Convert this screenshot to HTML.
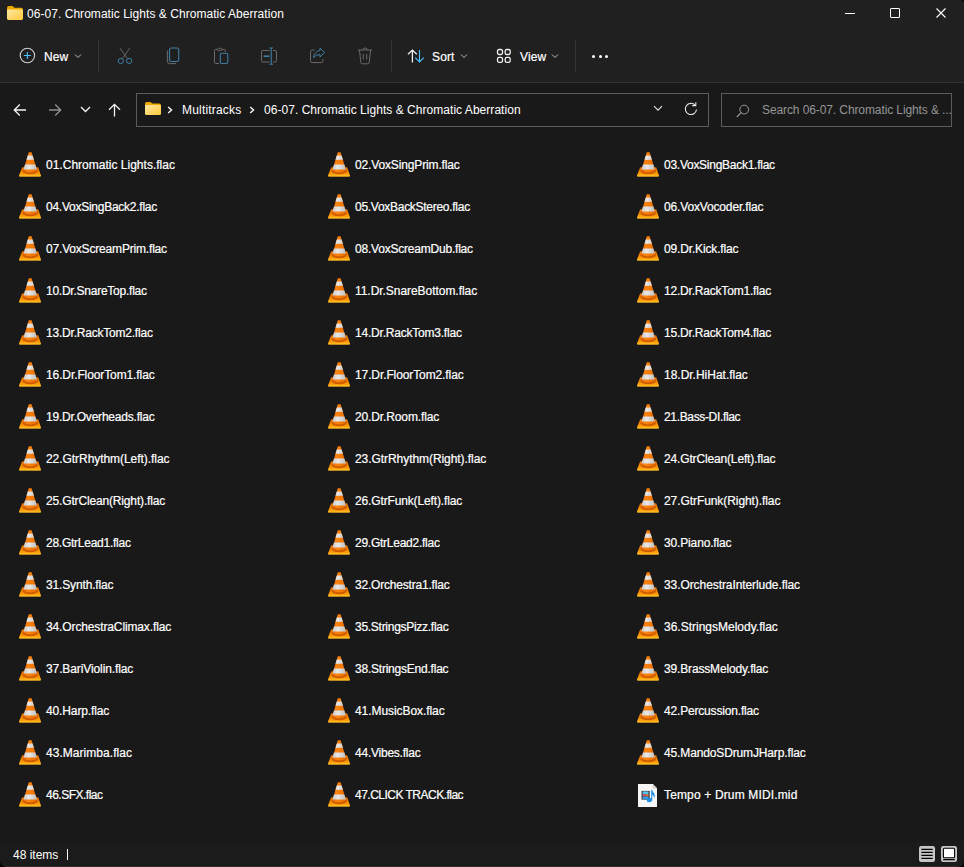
<!DOCTYPE html>
<html><head><meta charset="utf-8">
<style>
html,body{margin:0;padding:0;width:964px;height:867px;overflow:hidden;background:#000;}
body{font-family:"Liberation Sans",sans-serif;font-size:12px;color:#fff;position:relative;}
#win{position:absolute;left:0;top:0;width:964px;height:867px;box-sizing:border-box;border-bottom:1px solid #2e2e2e;background:#191919;border-radius:0 4px 7px 7px;overflow:hidden;}
#top{position:absolute;left:0;top:0;width:964px;height:82px;background:#202020;}
#sep{position:absolute;left:0;top:82px;width:964px;height:1px;background:#333;}
.a{position:absolute;}
.t{position:absolute;white-space:nowrap;line-height:14px;}
.ic{position:absolute;}
.fn{position:absolute;white-space:nowrap;line-height:14px;color:#fff;-webkit-text-stroke:0.2px #fff;}
.vsep{position:absolute;width:1px;background:#353535;}
.box{position:absolute;border:1px solid #5c5c5c;box-sizing:border-box;background:#191919;}
#status{position:absolute;left:0;top:842px;width:964px;height:25px;background:#1b1b1b;}
</style></head><body>
<svg width="0" height="0" style="position:absolute">
<defs>
<linearGradient id="cg" x1="0" x2="1" y1="0" y2="0">
<stop offset="0" stop-color="#d45800"/><stop offset="0.4" stop-color="#fa8412"/><stop offset="0.7" stop-color="#f07400"/><stop offset="1" stop-color="#c95000"/>
</linearGradient>
<linearGradient id="bg" x1="0" x2="0" y1="0" y2="1">
<stop offset="0" stop-color="#e46800"/><stop offset="0.6" stop-color="#f89400"/><stop offset="1" stop-color="#ffb820"/>
</linearGradient>
<linearGradient id="wg" x1="0" x2="1" y1="0" y2="0">
<stop offset="0" stop-color="#b0b0b0"/><stop offset="0.45" stop-color="#e8e8e8"/><stop offset="1" stop-color="#a8a8a8"/>
</linearGradient>
<linearGradient id="fg" x1="0" y1="0" x2="1" y2="1"><stop offset="0" stop-color="#ffe9a3"/><stop offset="1" stop-color="#ffc83a"/></linearGradient>
<clipPath id="cc"><path d="M9.8 0.3 L12.6 0.3 L18.2 18.5 Q11.2 22.5 4.2 18.5 Z"/></clipPath>
</defs></svg>
<div id="win">
<div id="top"></div>
<div id="sep"></div>
<!-- title -->
<svg class="a" style="left:7px;top:6px" width="16" height="14" viewBox="0 0 16 14">
<path d="M0 2 Q0 0 2 0 L5.5 0 L7.5 1.8 L14 1.8 Q16 1.8 16 3.8 L16 12 Q16 14 14 14 L2 14 Q0 14 0 12 Z" fill="#ecaa00"/>
<path d="M0 4.6 Q0 3.6 1.3 3.6 L14.7 3.6 Q16 3.6 16 4.9 L16 12 Q16 14 14 14 L2 14 Q0 14 0 12 Z" fill="url(#fg)"/>
</svg>
<div class="t" style="left:27px;top:7px;letter-spacing:0.045px">06-07. Chromatic Lights &amp; Chromatic Aberration</div>
<!-- window controls -->
<div class="a" style="left:845px;top:13px;width:10px;height:1px;background:#fff"></div>
<div class="a" style="left:890px;top:8px;width:10px;height:10px;border:1px solid #fff;box-sizing:border-box;border-radius:1px"></div>
<svg class="a" style="left:936px;top:8px" width="10" height="10" viewBox="0 0 10 10"><path d="M0.5 0.5 L9.5 9.5 M9.5 0.5 L0.5 9.5" stroke="#fff" stroke-width="1.1"/></svg>
<!-- command bar -->
<svg class="a" style="left:19px;top:47px" width="17" height="17" viewBox="0 0 17 17">
<circle cx="8.4" cy="8.5" r="7.2" fill="none" stroke="#d0d0d0" stroke-width="1.1"/>
<path d="M8.4 5 V12 M4.9 8.5 H11.9" stroke="#4cc2ff" stroke-width="1.1"/>
</svg>
<div class="t" style="left:44px;top:50px;letter-spacing:0.12px;-webkit-text-stroke:0.2px #fff">New</div>
<svg class="a" style="left:74px;top:53px" width="8" height="6" viewBox="0 0 8 6"><path d="M1 1.5 L4 4.5 L7 1.5" fill="none" stroke="#bbb" stroke-width="1"/></svg>
<div class="vsep" style="left:98px;top:40px;height:32px"></div>
<!-- cut -->
<svg class="a" style="left:116px;top:47px" width="18" height="18" viewBox="0 0 18 18">
<path d="M3.9 1 L11.2 11.4 M13.9 1 L6.6 11.4" stroke="#666" stroke-width="1"/>
<circle cx="4.8" cy="13.9" r="2.6" fill="#202020" stroke="#3f7ea3" stroke-width="1"/>
<circle cx="13.1" cy="13.9" r="2.6" fill="#202020" stroke="#3f7ea3" stroke-width="1"/>
</svg>
<!-- copy -->
<svg class="a" style="left:166px;top:47px" width="14" height="18" viewBox="0 0 14 18">
<path d="M1.4 3.5 V14.5 Q1.4 16.6 3.5 16.6 H10" fill="none" stroke="#6a6a6a" stroke-width="1"/>
<rect x="3.5" y="1" width="9.2" height="13.5" rx="1.8" fill="none" stroke="#3f7ea3" stroke-width="1.1"/>
</svg>
<!-- paste -->
<svg class="a" style="left:213px;top:47px" width="16" height="18" viewBox="0 0 16 18">
<path d="M6 16.5 H2.5 Q1.5 16.5 1.5 15.5 V3.5 Q1.5 2.5 2.5 2.5 H4.5 M9 2.5 H11 Q12.2 2.5 12.2 3.5 V5" fill="none" stroke="#6a6a6a" stroke-width="1"/>
<rect x="4.5" y="1.3" width="4.5" height="2.4" rx="1.2" fill="none" stroke="#6a6a6a" stroke-width="1"/>
<rect x="7.3" y="6.3" width="7.5" height="10.2" rx="1.5" fill="none" stroke="#3f7ea3" stroke-width="1.1"/>
</svg>
<!-- rename -->
<svg class="a" style="left:260px;top:47px" width="18" height="18" viewBox="0 0 18 18">
<path d="M9.5 3.5 H3 Q1.5 3.5 1.5 5 V13.5 Q1.5 15 3 15 H9.5 M13 3.5 H15 Q16.5 3.5 16.5 5 V13.5 Q16.5 15 15 15 H13" fill="none" stroke="#6a6a6a" stroke-width="1"/>
<path d="M11.2 1 V17.2 M9.4 1 H13 M9.4 17.2 H13" fill="none" stroke="#3f7ea3" stroke-width="1.1"/><path d="M3.6 9.2 H9.4" stroke="#3f7ea3" stroke-width="1.7"/>
</svg>
<!-- share -->
<svg class="a" style="left:309px;top:47px" width="17" height="17" viewBox="0 0 17 17">
<path d="M5.5 3 H3.2 Q1.5 3 1.5 4.7 V13.8 Q1.5 15.6 3.2 15.6 H12.3 Q14 15.6 14 13.8 V12" fill="none" stroke="#6a6a6a" stroke-width="1"/>
<path d="M11 1 L15.5 5.5 L11 10 V7.6 Q7 7.3 4.5 10.5 Q5.3 4.5 11 3.4 Z" fill="none" stroke="#3f7ea3" stroke-width="1" stroke-linejoin="round"/>
</svg>
<!-- delete -->
<svg class="a" style="left:357px;top:47px" width="16" height="18" viewBox="0 0 16 18">
<path d="M0.8 3 H15.2 M5.8 3 Q5.8 1 8 1 Q10.2 1 10.2 3 M2.5 3 L3.8 15.5 Q4 16.8 5.3 16.8 H10.7 Q12 16.8 12.2 15.5 L13.5 3 M6.3 7 V12.5 M9.7 7 V12.5" fill="none" stroke="#6a6a6a" stroke-width="1"/>
</svg>
<div class="vsep" style="left:391px;top:40px;height:32px"></div>
<!-- sort -->
<svg class="a" style="left:407px;top:49px" width="18" height="14" viewBox="0 0 18 14">
<path d="M5.4 1 V13.5 M1 5.3 L5.4 1 L9.8 5.3" fill="none" stroke="#f2f2f2" stroke-width="1.25"/>
<path d="M12.5 1 V13 M8.2 8.7 L12.5 13 L16.8 8.7" fill="none" stroke="#4cc2ff" stroke-width="1.1"/>
</svg>
<div class="t" style="left:432px;top:50px;letter-spacing:0.15px;-webkit-text-stroke:0.2px #fff">Sort</div>
<svg class="a" style="left:460px;top:53px" width="8" height="6" viewBox="0 0 8 6"><path d="M1 1.5 L4 4.5 L7 1.5" fill="none" stroke="#bbb" stroke-width="1"/></svg>
<!-- view -->
<svg class="a" style="left:496px;top:48px" width="16" height="16" viewBox="0 0 16 16">
<rect x="1.5" y="1.5" width="5" height="5" rx="1.6" fill="none" stroke="#f0f0f0" stroke-width="1.3"/>
<rect x="9.2" y="1.5" width="5" height="5" rx="1.6" fill="none" stroke="#f0f0f0" stroke-width="1.3"/>
<rect x="1.5" y="9.3" width="5" height="5" rx="1.6" fill="none" stroke="#f0f0f0" stroke-width="1.3"/>
<rect x="9.2" y="9.3" width="5" height="5" rx="1.6" fill="none" stroke="#f0f0f0" stroke-width="1.3"/>
</svg>
<div class="t" style="left:520px;top:50px;letter-spacing:0.12px;-webkit-text-stroke:0.2px #fff">View</div>
<svg class="a" style="left:551px;top:53px" width="8" height="6" viewBox="0 0 8 6"><path d="M1 1.5 L4 4.5 L7 1.5" fill="none" stroke="#bbb" stroke-width="1"/></svg>
<div class="vsep" style="left:575px;top:40px;height:32px"></div>
<div class="a" style="left:592.2px;top:55.3px;width:3px;height:3px;border-radius:50%;background:#fff"></div>
<div class="a" style="left:598.5px;top:55.3px;width:3px;height:3px;border-radius:50%;background:#fff"></div>
<div class="a" style="left:604.8px;top:55.3px;width:3px;height:3px;border-radius:50%;background:#fff"></div>

<!-- address row -->
<svg class="a" style="left:13px;top:103px" width="14" height="14" viewBox="0 0 14 14">
<path d="M13 7 H1.5 M6.8 1.6 L1.3 7 L6.8 12.4" fill="none" stroke="#f2f2f2" stroke-width="1.35"/>
</svg>
<svg class="a" style="left:48px;top:103px" width="14" height="14" viewBox="0 0 14 14">
<path d="M1 7 H12.5 M7.2 1.6 L12.7 7 L7.2 12.4" fill="none" stroke="#909090" stroke-width="1.35"/>
</svg>
<svg class="a" style="left:80px;top:106px" width="11" height="7" viewBox="0 0 11 7">
<path d="M1 1 L5.5 5.5 L10 1" fill="none" stroke="#f2f2f2" stroke-width="1.35"/>
</svg>
<svg class="a" style="left:108px;top:103px" width="13" height="14" viewBox="0 0 13 14">
<path d="M6.5 13.5 V1.3 M1 6.8 L6.5 1.3 L12 6.8" fill="none" stroke="#f2f2f2" stroke-width="1.3"/>
</svg>
<div class="box" style="left:136px;top:93px;width:573px;height:34px"></div>
<svg class="a" style="left:145px;top:102px" width="16" height="13" viewBox="0 0 16 13">
<path d="M0 1.8 Q0 0 1.8 0 L5.5 0 L7.3 1.6 L14.2 1.6 Q16 1.6 16 3.4 L16 11.2 Q16 13 14.2 13 L1.8 13 Q0 13 0 11.2 Z" fill="#ecaa00"/>
<path d="M0 4 Q0 3 1.3 3 L14.7 3 Q16 3 16 4.3 L16 11.2 Q16 13 14.2 13 L1.8 13 Q0 13 0 11.2 Z" fill="url(#fg)"/>
</svg>
<svg class="a" style="left:167px;top:106px" width="6" height="8" viewBox="0 0 6 8"><path d="M1.2 1 L4.5 4 L1.2 7" fill="none" stroke="#f2f2f2" stroke-width="1.5"/></svg>
<div class="t" style="left:182px;top:103px;letter-spacing:0.18px">Multitracks</div>
<svg class="a" style="left:249px;top:106px" width="6" height="8" viewBox="0 0 6 8"><path d="M1.2 1 L4.5 4 L1.2 7" fill="none" stroke="#f2f2f2" stroke-width="1.5"/></svg>
<div class="t" style="left:264px;top:103px;letter-spacing:0.04px">06-07. Chromatic Lights &amp; Chromatic Aberration</div>
<svg class="a" style="left:653px;top:105px" width="10" height="7" viewBox="0 0 10 7"><path d="M1 1.2 L5 5.2 L9 1.2" fill="none" stroke="#e8e8e8" stroke-width="1.1"/></svg>
<svg class="a" style="left:684px;top:102px" width="14" height="14" viewBox="0 0 14 14">
<path d="M11.2 3.3 A5.6 5.6 0 1 0 12.5 7.5" fill="none" stroke="#e8e8e8" stroke-width="1.1"/>
<path d="M8.2 3.6 H11.8 V0.2" fill="none" stroke="#e8e8e8" stroke-width="1.1"/>
</svg>
<div class="box" style="left:721px;top:93px;width:231px;height:34px;overflow:hidden">
<svg class="a" style="left:14px;top:10px" width="14" height="14" viewBox="0 0 14 14">
<circle cx="8.2" cy="5.6" r="4.4" fill="none" stroke="#9a9a9a" stroke-width="1"/>
<path d="M5.4 8.4 L0.8 13" stroke="#9a9a9a" stroke-width="1.1"/>
</svg>
<div class="t" style="left:40px;top:9px;color:#959595;letter-spacing:-0.1px">Search 06-07. Chromatic Lights &amp; ...</div>
</div>

<!-- items -->
<svg class="ic" style="left:19px;top:152px" width="22" height="25" viewBox="0 0 22 25"><path d="M3.2 15.3 L19.2 15.3 L21.9 23.2 Q22 24.6 20.6 24.6 L1.4 24.6 Q0 24.6 0.1 23.2 Z" fill="url(#bg)"/>
<path d="M0.4 23.0 L21.6 23.0 L21.9 24.6 L0.1 24.6 Z" fill="#ffb820" opacity="0.8"/>
<ellipse cx="11.2" cy="18.9" rx="7.8" ry="3.4" fill="#cf5a00"/>
<g clip-path="url(#cc)">
<rect x="0" y="0" width="22" height="22" fill="url(#cg)"/>
<rect x="0" y="3.5" width="22" height="4.3" fill="url(#wg)"/>
<rect x="0" y="12.5" width="22" height="5" fill="url(#wg)"/>
</g></svg><div class="fn" style="left:46px;top:158px;letter-spacing:0.009px">01.Chromatic Lights.flac</div>
<svg class="ic" style="left:328px;top:152px" width="22" height="25" viewBox="0 0 22 25"><path d="M3.2 15.3 L19.2 15.3 L21.9 23.2 Q22 24.6 20.6 24.6 L1.4 24.6 Q0 24.6 0.1 23.2 Z" fill="url(#bg)"/>
<path d="M0.4 23.0 L21.6 23.0 L21.9 24.6 L0.1 24.6 Z" fill="#ffb820" opacity="0.8"/>
<ellipse cx="11.2" cy="18.9" rx="7.8" ry="3.4" fill="#cf5a00"/>
<g clip-path="url(#cc)">
<rect x="0" y="0" width="22" height="22" fill="url(#cg)"/>
<rect x="0" y="3.5" width="22" height="4.3" fill="url(#wg)"/>
<rect x="0" y="12.5" width="22" height="5" fill="url(#wg)"/>
</g></svg><div class="fn" style="left:355px;top:158px;letter-spacing:-0.143px">02.VoxSingPrim.flac</div>
<svg class="ic" style="left:637px;top:152px" width="22" height="25" viewBox="0 0 22 25"><path d="M3.2 15.3 L19.2 15.3 L21.9 23.2 Q22 24.6 20.6 24.6 L1.4 24.6 Q0 24.6 0.1 23.2 Z" fill="url(#bg)"/>
<path d="M0.4 23.0 L21.6 23.0 L21.9 24.6 L0.1 24.6 Z" fill="#ffb820" opacity="0.8"/>
<ellipse cx="11.2" cy="18.9" rx="7.8" ry="3.4" fill="#cf5a00"/>
<g clip-path="url(#cc)">
<rect x="0" y="0" width="22" height="22" fill="url(#cg)"/>
<rect x="0" y="3.5" width="22" height="4.3" fill="url(#wg)"/>
<rect x="0" y="12.5" width="22" height="5" fill="url(#wg)"/>
</g></svg><div class="fn" style="left:664px;top:158px;letter-spacing:-0.263px">03.VoxSingBack1.flac</div>
<svg class="ic" style="left:19px;top:194px" width="22" height="25" viewBox="0 0 22 25"><path d="M3.2 15.3 L19.2 15.3 L21.9 23.2 Q22 24.6 20.6 24.6 L1.4 24.6 Q0 24.6 0.1 23.2 Z" fill="url(#bg)"/>
<path d="M0.4 23.0 L21.6 23.0 L21.9 24.6 L0.1 24.6 Z" fill="#ffb820" opacity="0.8"/>
<ellipse cx="11.2" cy="18.9" rx="7.8" ry="3.4" fill="#cf5a00"/>
<g clip-path="url(#cc)">
<rect x="0" y="0" width="22" height="22" fill="url(#cg)"/>
<rect x="0" y="3.5" width="22" height="4.3" fill="url(#wg)"/>
<rect x="0" y="12.5" width="22" height="5" fill="url(#wg)"/>
</g></svg><div class="fn" style="left:46px;top:200px;letter-spacing:-0.252px">04.VoxSingBack2.flac</div>
<svg class="ic" style="left:328px;top:194px" width="22" height="25" viewBox="0 0 22 25"><path d="M3.2 15.3 L19.2 15.3 L21.9 23.2 Q22 24.6 20.6 24.6 L1.4 24.6 Q0 24.6 0.1 23.2 Z" fill="url(#bg)"/>
<path d="M0.4 23.0 L21.6 23.0 L21.9 24.6 L0.1 24.6 Z" fill="#ffb820" opacity="0.8"/>
<ellipse cx="11.2" cy="18.9" rx="7.8" ry="3.4" fill="#cf5a00"/>
<g clip-path="url(#cc)">
<rect x="0" y="0" width="22" height="22" fill="url(#cg)"/>
<rect x="0" y="3.5" width="22" height="4.3" fill="url(#wg)"/>
<rect x="0" y="12.5" width="22" height="5" fill="url(#wg)"/>
</g></svg><div class="fn" style="left:355px;top:200px;letter-spacing:-0.280px">05.VoxBackStereo.flac</div>
<svg class="ic" style="left:637px;top:194px" width="22" height="25" viewBox="0 0 22 25"><path d="M3.2 15.3 L19.2 15.3 L21.9 23.2 Q22 24.6 20.6 24.6 L1.4 24.6 Q0 24.6 0.1 23.2 Z" fill="url(#bg)"/>
<path d="M0.4 23.0 L21.6 23.0 L21.9 24.6 L0.1 24.6 Z" fill="#ffb820" opacity="0.8"/>
<ellipse cx="11.2" cy="18.9" rx="7.8" ry="3.4" fill="#cf5a00"/>
<g clip-path="url(#cc)">
<rect x="0" y="0" width="22" height="22" fill="url(#cg)"/>
<rect x="0" y="3.5" width="22" height="4.3" fill="url(#wg)"/>
<rect x="0" y="12.5" width="22" height="5" fill="url(#wg)"/>
</g></svg><div class="fn" style="left:664px;top:200px;letter-spacing:-0.153px">06.VoxVocoder.flac</div>
<svg class="ic" style="left:19px;top:236px" width="22" height="25" viewBox="0 0 22 25"><path d="M3.2 15.3 L19.2 15.3 L21.9 23.2 Q22 24.6 20.6 24.6 L1.4 24.6 Q0 24.6 0.1 23.2 Z" fill="url(#bg)"/>
<path d="M0.4 23.0 L21.6 23.0 L21.9 24.6 L0.1 24.6 Z" fill="#ffb820" opacity="0.8"/>
<ellipse cx="11.2" cy="18.9" rx="7.8" ry="3.4" fill="#cf5a00"/>
<g clip-path="url(#cc)">
<rect x="0" y="0" width="22" height="22" fill="url(#cg)"/>
<rect x="0" y="3.5" width="22" height="4.3" fill="url(#wg)"/>
<rect x="0" y="12.5" width="22" height="5" fill="url(#wg)"/>
</g></svg><div class="fn" style="left:46px;top:242px;letter-spacing:-0.180px">07.VoxScreamPrim.flac</div>
<svg class="ic" style="left:328px;top:236px" width="22" height="25" viewBox="0 0 22 25"><path d="M3.2 15.3 L19.2 15.3 L21.9 23.2 Q22 24.6 20.6 24.6 L1.4 24.6 Q0 24.6 0.1 23.2 Z" fill="url(#bg)"/>
<path d="M0.4 23.0 L21.6 23.0 L21.9 24.6 L0.1 24.6 Z" fill="#ffb820" opacity="0.8"/>
<ellipse cx="11.2" cy="18.9" rx="7.8" ry="3.4" fill="#cf5a00"/>
<g clip-path="url(#cc)">
<rect x="0" y="0" width="22" height="22" fill="url(#cg)"/>
<rect x="0" y="3.5" width="22" height="4.3" fill="url(#wg)"/>
<rect x="0" y="12.5" width="22" height="5" fill="url(#wg)"/>
</g></svg><div class="fn" style="left:355px;top:242px;letter-spacing:-0.211px">08.VoxScreamDub.flac</div>
<svg class="ic" style="left:637px;top:236px" width="22" height="25" viewBox="0 0 22 25"><path d="M3.2 15.3 L19.2 15.3 L21.9 23.2 Q22 24.6 20.6 24.6 L1.4 24.6 Q0 24.6 0.1 23.2 Z" fill="url(#bg)"/>
<path d="M0.4 23.0 L21.6 23.0 L21.9 24.6 L0.1 24.6 Z" fill="#ffb820" opacity="0.8"/>
<ellipse cx="11.2" cy="18.9" rx="7.8" ry="3.4" fill="#cf5a00"/>
<g clip-path="url(#cc)">
<rect x="0" y="0" width="22" height="22" fill="url(#cg)"/>
<rect x="0" y="3.5" width="22" height="4.3" fill="url(#wg)"/>
<rect x="0" y="12.5" width="22" height="5" fill="url(#wg)"/>
</g></svg><div class="fn" style="left:664px;top:242px;letter-spacing:-0.156px">09.Dr.Kick.flac</div>
<svg class="ic" style="left:19px;top:278px" width="22" height="25" viewBox="0 0 22 25"><path d="M3.2 15.3 L19.2 15.3 L21.9 23.2 Q22 24.6 20.6 24.6 L1.4 24.6 Q0 24.6 0.1 23.2 Z" fill="url(#bg)"/>
<path d="M0.4 23.0 L21.6 23.0 L21.9 24.6 L0.1 24.6 Z" fill="#ffb820" opacity="0.8"/>
<ellipse cx="11.2" cy="18.9" rx="7.8" ry="3.4" fill="#cf5a00"/>
<g clip-path="url(#cc)">
<rect x="0" y="0" width="22" height="22" fill="url(#cg)"/>
<rect x="0" y="3.5" width="22" height="4.3" fill="url(#wg)"/>
<rect x="0" y="12.5" width="22" height="5" fill="url(#wg)"/>
</g></svg><div class="fn" style="left:46px;top:284px;letter-spacing:-0.245px">10.Dr.SnareTop.flac</div>
<svg class="ic" style="left:328px;top:278px" width="22" height="25" viewBox="0 0 22 25"><path d="M3.2 15.3 L19.2 15.3 L21.9 23.2 Q22 24.6 20.6 24.6 L1.4 24.6 Q0 24.6 0.1 23.2 Z" fill="url(#bg)"/>
<path d="M0.4 23.0 L21.6 23.0 L21.9 24.6 L0.1 24.6 Z" fill="#ffb820" opacity="0.8"/>
<ellipse cx="11.2" cy="18.9" rx="7.8" ry="3.4" fill="#cf5a00"/>
<g clip-path="url(#cc)">
<rect x="0" y="0" width="22" height="22" fill="url(#cg)"/>
<rect x="0" y="3.5" width="22" height="4.3" fill="url(#wg)"/>
<rect x="0" y="12.5" width="22" height="5" fill="url(#wg)"/>
</g></svg><div class="fn" style="left:355px;top:284px;letter-spacing:-0.048px">11.Dr.SnareBottom.flac</div>
<svg class="ic" style="left:637px;top:278px" width="22" height="25" viewBox="0 0 22 25"><path d="M3.2 15.3 L19.2 15.3 L21.9 23.2 Q22 24.6 20.6 24.6 L1.4 24.6 Q0 24.6 0.1 23.2 Z" fill="url(#bg)"/>
<path d="M0.4 23.0 L21.6 23.0 L21.9 24.6 L0.1 24.6 Z" fill="#ffb820" opacity="0.8"/>
<ellipse cx="11.2" cy="18.9" rx="7.8" ry="3.4" fill="#cf5a00"/>
<g clip-path="url(#cc)">
<rect x="0" y="0" width="22" height="22" fill="url(#cg)"/>
<rect x="0" y="3.5" width="22" height="4.3" fill="url(#wg)"/>
<rect x="0" y="12.5" width="22" height="5" fill="url(#wg)"/>
</g></svg><div class="fn" style="left:664px;top:284px;letter-spacing:-0.199px">12.Dr.RackTom1.flac</div>
<svg class="ic" style="left:19px;top:320px" width="22" height="25" viewBox="0 0 22 25"><path d="M3.2 15.3 L19.2 15.3 L21.9 23.2 Q22 24.6 20.6 24.6 L1.4 24.6 Q0 24.6 0.1 23.2 Z" fill="url(#bg)"/>
<path d="M0.4 23.0 L21.6 23.0 L21.9 24.6 L0.1 24.6 Z" fill="#ffb820" opacity="0.8"/>
<ellipse cx="11.2" cy="18.9" rx="7.8" ry="3.4" fill="#cf5a00"/>
<g clip-path="url(#cc)">
<rect x="0" y="0" width="22" height="22" fill="url(#cg)"/>
<rect x="0" y="3.5" width="22" height="4.3" fill="url(#wg)"/>
<rect x="0" y="12.5" width="22" height="5" fill="url(#wg)"/>
</g></svg><div class="fn" style="left:46px;top:326px;letter-spacing:-0.211px">13.Dr.RackTom2.flac</div>
<svg class="ic" style="left:328px;top:320px" width="22" height="25" viewBox="0 0 22 25"><path d="M3.2 15.3 L19.2 15.3 L21.9 23.2 Q22 24.6 20.6 24.6 L1.4 24.6 Q0 24.6 0.1 23.2 Z" fill="url(#bg)"/>
<path d="M0.4 23.0 L21.6 23.0 L21.9 24.6 L0.1 24.6 Z" fill="#ffb820" opacity="0.8"/>
<ellipse cx="11.2" cy="18.9" rx="7.8" ry="3.4" fill="#cf5a00"/>
<g clip-path="url(#cc)">
<rect x="0" y="0" width="22" height="22" fill="url(#cg)"/>
<rect x="0" y="3.5" width="22" height="4.3" fill="url(#wg)"/>
<rect x="0" y="12.5" width="22" height="5" fill="url(#wg)"/>
</g></svg><div class="fn" style="left:355px;top:326px;letter-spacing:-0.211px">14.Dr.RackTom3.flac</div>
<svg class="ic" style="left:637px;top:320px" width="22" height="25" viewBox="0 0 22 25"><path d="M3.2 15.3 L19.2 15.3 L21.9 23.2 Q22 24.6 20.6 24.6 L1.4 24.6 Q0 24.6 0.1 23.2 Z" fill="url(#bg)"/>
<path d="M0.4 23.0 L21.6 23.0 L21.9 24.6 L0.1 24.6 Z" fill="#ffb820" opacity="0.8"/>
<ellipse cx="11.2" cy="18.9" rx="7.8" ry="3.4" fill="#cf5a00"/>
<g clip-path="url(#cc)">
<rect x="0" y="0" width="22" height="22" fill="url(#cg)"/>
<rect x="0" y="3.5" width="22" height="4.3" fill="url(#wg)"/>
<rect x="0" y="12.5" width="22" height="5" fill="url(#wg)"/>
</g></svg><div class="fn" style="left:664px;top:326px;letter-spacing:-0.199px">15.Dr.RackTom4.flac</div>
<svg class="ic" style="left:19px;top:362px" width="22" height="25" viewBox="0 0 22 25"><path d="M3.2 15.3 L19.2 15.3 L21.9 23.2 Q22 24.6 20.6 24.6 L1.4 24.6 Q0 24.6 0.1 23.2 Z" fill="url(#bg)"/>
<path d="M0.4 23.0 L21.6 23.0 L21.9 24.6 L0.1 24.6 Z" fill="#ffb820" opacity="0.8"/>
<ellipse cx="11.2" cy="18.9" rx="7.8" ry="3.4" fill="#cf5a00"/>
<g clip-path="url(#cc)">
<rect x="0" y="0" width="22" height="22" fill="url(#cg)"/>
<rect x="0" y="3.5" width="22" height="4.3" fill="url(#wg)"/>
<rect x="0" y="12.5" width="22" height="5" fill="url(#wg)"/>
</g></svg><div class="fn" style="left:46px;top:368px;letter-spacing:-0.105px">16.Dr.FloorTom1.flac</div>
<svg class="ic" style="left:328px;top:362px" width="22" height="25" viewBox="0 0 22 25"><path d="M3.2 15.3 L19.2 15.3 L21.9 23.2 Q22 24.6 20.6 24.6 L1.4 24.6 Q0 24.6 0.1 23.2 Z" fill="url(#bg)"/>
<path d="M0.4 23.0 L21.6 23.0 L21.9 24.6 L0.1 24.6 Z" fill="#ffb820" opacity="0.8"/>
<ellipse cx="11.2" cy="18.9" rx="7.8" ry="3.4" fill="#cf5a00"/>
<g clip-path="url(#cc)">
<rect x="0" y="0" width="22" height="22" fill="url(#cg)"/>
<rect x="0" y="3.5" width="22" height="4.3" fill="url(#wg)"/>
<rect x="0" y="12.5" width="22" height="5" fill="url(#wg)"/>
</g></svg><div class="fn" style="left:355px;top:368px;letter-spacing:-0.105px">17.Dr.FloorTom2.flac</div>
<svg class="ic" style="left:637px;top:362px" width="22" height="25" viewBox="0 0 22 25"><path d="M3.2 15.3 L19.2 15.3 L21.9 23.2 Q22 24.6 20.6 24.6 L1.4 24.6 Q0 24.6 0.1 23.2 Z" fill="url(#bg)"/>
<path d="M0.4 23.0 L21.6 23.0 L21.9 24.6 L0.1 24.6 Z" fill="#ffb820" opacity="0.8"/>
<ellipse cx="11.2" cy="18.9" rx="7.8" ry="3.4" fill="#cf5a00"/>
<g clip-path="url(#cc)">
<rect x="0" y="0" width="22" height="22" fill="url(#cg)"/>
<rect x="0" y="3.5" width="22" height="4.3" fill="url(#wg)"/>
<rect x="0" y="12.5" width="22" height="5" fill="url(#wg)"/>
</g></svg><div class="fn" style="left:664px;top:368px;letter-spacing:-0.013px">18.Dr.HiHat.flac</div>
<svg class="ic" style="left:19px;top:404px" width="22" height="25" viewBox="0 0 22 25"><path d="M3.2 15.3 L19.2 15.3 L21.9 23.2 Q22 24.6 20.6 24.6 L1.4 24.6 Q0 24.6 0.1 23.2 Z" fill="url(#bg)"/>
<path d="M0.4 23.0 L21.6 23.0 L21.9 24.6 L0.1 24.6 Z" fill="#ffb820" opacity="0.8"/>
<ellipse cx="11.2" cy="18.9" rx="7.8" ry="3.4" fill="#cf5a00"/>
<g clip-path="url(#cc)">
<rect x="0" y="0" width="22" height="22" fill="url(#cg)"/>
<rect x="0" y="3.5" width="22" height="4.3" fill="url(#wg)"/>
<rect x="0" y="12.5" width="22" height="5" fill="url(#wg)"/>
</g></svg><div class="fn" style="left:46px;top:410px;letter-spacing:-0.211px">19.Dr.Overheads.flac</div>
<svg class="ic" style="left:328px;top:404px" width="22" height="25" viewBox="0 0 22 25"><path d="M3.2 15.3 L19.2 15.3 L21.9 23.2 Q22 24.6 20.6 24.6 L1.4 24.6 Q0 24.6 0.1 23.2 Z" fill="url(#bg)"/>
<path d="M0.4 23.0 L21.6 23.0 L21.9 24.6 L0.1 24.6 Z" fill="#ffb820" opacity="0.8"/>
<ellipse cx="11.2" cy="18.9" rx="7.8" ry="3.4" fill="#cf5a00"/>
<g clip-path="url(#cc)">
<rect x="0" y="0" width="22" height="22" fill="url(#cg)"/>
<rect x="0" y="3.5" width="22" height="4.3" fill="url(#wg)"/>
<rect x="0" y="12.5" width="22" height="5" fill="url(#wg)"/>
</g></svg><div class="fn" style="left:355px;top:410px;letter-spacing:-0.128px">20.Dr.Room.flac</div>
<svg class="ic" style="left:637px;top:404px" width="22" height="25" viewBox="0 0 22 25"><path d="M3.2 15.3 L19.2 15.3 L21.9 23.2 Q22 24.6 20.6 24.6 L1.4 24.6 Q0 24.6 0.1 23.2 Z" fill="url(#bg)"/>
<path d="M0.4 23.0 L21.6 23.0 L21.9 24.6 L0.1 24.6 Z" fill="#ffb820" opacity="0.8"/>
<ellipse cx="11.2" cy="18.9" rx="7.8" ry="3.4" fill="#cf5a00"/>
<g clip-path="url(#cc)">
<rect x="0" y="0" width="22" height="22" fill="url(#cg)"/>
<rect x="0" y="3.5" width="22" height="4.3" fill="url(#wg)"/>
<rect x="0" y="12.5" width="22" height="5" fill="url(#wg)"/>
</g></svg><div class="fn" style="left:664px;top:410px;letter-spacing:-0.342px">21.Bass-DI.flac</div>
<svg class="ic" style="left:19px;top:446px" width="22" height="25" viewBox="0 0 22 25"><path d="M3.2 15.3 L19.2 15.3 L21.9 23.2 Q22 24.6 20.6 24.6 L1.4 24.6 Q0 24.6 0.1 23.2 Z" fill="url(#bg)"/>
<path d="M0.4 23.0 L21.6 23.0 L21.9 24.6 L0.1 24.6 Z" fill="#ffb820" opacity="0.8"/>
<ellipse cx="11.2" cy="18.9" rx="7.8" ry="3.4" fill="#cf5a00"/>
<g clip-path="url(#cc)">
<rect x="0" y="0" width="22" height="22" fill="url(#cg)"/>
<rect x="0" y="3.5" width="22" height="4.3" fill="url(#wg)"/>
<rect x="0" y="12.5" width="22" height="5" fill="url(#wg)"/>
</g></svg><div class="fn" style="left:46px;top:452px;letter-spacing:-0.055px">22.GtrRhythm(Left).flac</div>
<svg class="ic" style="left:328px;top:446px" width="22" height="25" viewBox="0 0 22 25"><path d="M3.2 15.3 L19.2 15.3 L21.9 23.2 Q22 24.6 20.6 24.6 L1.4 24.6 Q0 24.6 0.1 23.2 Z" fill="url(#bg)"/>
<path d="M0.4 23.0 L21.6 23.0 L21.9 24.6 L0.1 24.6 Z" fill="#ffb820" opacity="0.8"/>
<ellipse cx="11.2" cy="18.9" rx="7.8" ry="3.4" fill="#cf5a00"/>
<g clip-path="url(#cc)">
<rect x="0" y="0" width="22" height="22" fill="url(#cg)"/>
<rect x="0" y="3.5" width="22" height="4.3" fill="url(#wg)"/>
<rect x="0" y="12.5" width="22" height="5" fill="url(#wg)"/>
</g></svg><div class="fn" style="left:355px;top:452px;letter-spacing:-0.060px">23.GtrRhythm(Right).flac</div>
<svg class="ic" style="left:637px;top:446px" width="22" height="25" viewBox="0 0 22 25"><path d="M3.2 15.3 L19.2 15.3 L21.9 23.2 Q22 24.6 20.6 24.6 L1.4 24.6 Q0 24.6 0.1 23.2 Z" fill="url(#bg)"/>
<path d="M0.4 23.0 L21.6 23.0 L21.9 24.6 L0.1 24.6 Z" fill="#ffb820" opacity="0.8"/>
<ellipse cx="11.2" cy="18.9" rx="7.8" ry="3.4" fill="#cf5a00"/>
<g clip-path="url(#cc)">
<rect x="0" y="0" width="22" height="22" fill="url(#cg)"/>
<rect x="0" y="3.5" width="22" height="4.3" fill="url(#wg)"/>
<rect x="0" y="12.5" width="22" height="5" fill="url(#wg)"/>
</g></svg><div class="fn" style="left:664px;top:452px;letter-spacing:-0.152px">24.GtrClean(Left).flac</div>
<svg class="ic" style="left:19px;top:488px" width="22" height="25" viewBox="0 0 22 25"><path d="M3.2 15.3 L19.2 15.3 L21.9 23.2 Q22 24.6 20.6 24.6 L1.4 24.6 Q0 24.6 0.1 23.2 Z" fill="url(#bg)"/>
<path d="M0.4 23.0 L21.6 23.0 L21.9 24.6 L0.1 24.6 Z" fill="#ffb820" opacity="0.8"/>
<ellipse cx="11.2" cy="18.9" rx="7.8" ry="3.4" fill="#cf5a00"/>
<g clip-path="url(#cc)">
<rect x="0" y="0" width="22" height="22" fill="url(#cg)"/>
<rect x="0" y="3.5" width="22" height="4.3" fill="url(#wg)"/>
<rect x="0" y="12.5" width="22" height="5" fill="url(#wg)"/>
</g></svg><div class="fn" style="left:46px;top:494px;letter-spacing:-0.156px">25.GtrClean(Right).flac</div>
<svg class="ic" style="left:328px;top:488px" width="22" height="25" viewBox="0 0 22 25"><path d="M3.2 15.3 L19.2 15.3 L21.9 23.2 Q22 24.6 20.6 24.6 L1.4 24.6 Q0 24.6 0.1 23.2 Z" fill="url(#bg)"/>
<path d="M0.4 23.0 L21.6 23.0 L21.9 24.6 L0.1 24.6 Z" fill="#ffb820" opacity="0.8"/>
<ellipse cx="11.2" cy="18.9" rx="7.8" ry="3.4" fill="#cf5a00"/>
<g clip-path="url(#cc)">
<rect x="0" y="0" width="22" height="22" fill="url(#cg)"/>
<rect x="0" y="3.5" width="22" height="4.3" fill="url(#wg)"/>
<rect x="0" y="12.5" width="22" height="5" fill="url(#wg)"/>
</g></svg><div class="fn" style="left:355px;top:494px;letter-spacing:-0.140px">26.GtrFunk(Left).flac</div>
<svg class="ic" style="left:637px;top:488px" width="22" height="25" viewBox="0 0 22 25"><path d="M3.2 15.3 L19.2 15.3 L21.9 23.2 Q22 24.6 20.6 24.6 L1.4 24.6 Q0 24.6 0.1 23.2 Z" fill="url(#bg)"/>
<path d="M0.4 23.0 L21.6 23.0 L21.9 24.6 L0.1 24.6 Z" fill="#ffb820" opacity="0.8"/>
<ellipse cx="11.2" cy="18.9" rx="7.8" ry="3.4" fill="#cf5a00"/>
<g clip-path="url(#cc)">
<rect x="0" y="0" width="22" height="22" fill="url(#cg)"/>
<rect x="0" y="3.5" width="22" height="4.3" fill="url(#wg)"/>
<rect x="0" y="12.5" width="22" height="5" fill="url(#wg)"/>
</g></svg><div class="fn" style="left:664px;top:494px;letter-spacing:-0.075px">27.GtrFunk(Right).flac</div>
<svg class="ic" style="left:19px;top:530px" width="22" height="25" viewBox="0 0 22 25"><path d="M3.2 15.3 L19.2 15.3 L21.9 23.2 Q22 24.6 20.6 24.6 L1.4 24.6 Q0 24.6 0.1 23.2 Z" fill="url(#bg)"/>
<path d="M0.4 23.0 L21.6 23.0 L21.9 24.6 L0.1 24.6 Z" fill="#ffb820" opacity="0.8"/>
<ellipse cx="11.2" cy="18.9" rx="7.8" ry="3.4" fill="#cf5a00"/>
<g clip-path="url(#cc)">
<rect x="0" y="0" width="22" height="22" fill="url(#cg)"/>
<rect x="0" y="3.5" width="22" height="4.3" fill="url(#wg)"/>
<rect x="0" y="12.5" width="22" height="5" fill="url(#wg)"/>
</g></svg><div class="fn" style="left:46px;top:536px;letter-spacing:-0.253px">28.GtrLead1.flac</div>
<svg class="ic" style="left:328px;top:530px" width="22" height="25" viewBox="0 0 22 25"><path d="M3.2 15.3 L19.2 15.3 L21.9 23.2 Q22 24.6 20.6 24.6 L1.4 24.6 Q0 24.6 0.1 23.2 Z" fill="url(#bg)"/>
<path d="M0.4 23.0 L21.6 23.0 L21.9 24.6 L0.1 24.6 Z" fill="#ffb820" opacity="0.8"/>
<ellipse cx="11.2" cy="18.9" rx="7.8" ry="3.4" fill="#cf5a00"/>
<g clip-path="url(#cc)">
<rect x="0" y="0" width="22" height="22" fill="url(#cg)"/>
<rect x="0" y="3.5" width="22" height="4.3" fill="url(#wg)"/>
<rect x="0" y="12.5" width="22" height="5" fill="url(#wg)"/>
</g></svg><div class="fn" style="left:355px;top:536px;letter-spacing:-0.253px">29.GtrLead2.flac</div>
<svg class="ic" style="left:637px;top:530px" width="22" height="25" viewBox="0 0 22 25"><path d="M3.2 15.3 L19.2 15.3 L21.9 23.2 Q22 24.6 20.6 24.6 L1.4 24.6 Q0 24.6 0.1 23.2 Z" fill="url(#bg)"/>
<path d="M0.4 23.0 L21.6 23.0 L21.9 24.6 L0.1 24.6 Z" fill="#ffb820" opacity="0.8"/>
<ellipse cx="11.2" cy="18.9" rx="7.8" ry="3.4" fill="#cf5a00"/>
<g clip-path="url(#cc)">
<rect x="0" y="0" width="22" height="22" fill="url(#cg)"/>
<rect x="0" y="3.5" width="22" height="4.3" fill="url(#wg)"/>
<rect x="0" y="12.5" width="22" height="5" fill="url(#wg)"/>
</g></svg><div class="fn" style="left:664px;top:536px;letter-spacing:-0.150px">30.Piano.flac</div>
<svg class="ic" style="left:19px;top:572px" width="22" height="25" viewBox="0 0 22 25"><path d="M3.2 15.3 L19.2 15.3 L21.9 23.2 Q22 24.6 20.6 24.6 L1.4 24.6 Q0 24.6 0.1 23.2 Z" fill="url(#bg)"/>
<path d="M0.4 23.0 L21.6 23.0 L21.9 24.6 L0.1 24.6 Z" fill="#ffb820" opacity="0.8"/>
<ellipse cx="11.2" cy="18.9" rx="7.8" ry="3.4" fill="#cf5a00"/>
<g clip-path="url(#cc)">
<rect x="0" y="0" width="22" height="22" fill="url(#cg)"/>
<rect x="0" y="3.5" width="22" height="4.3" fill="url(#wg)"/>
<rect x="0" y="12.5" width="22" height="5" fill="url(#wg)"/>
</g></svg><div class="fn" style="left:46px;top:578px;letter-spacing:-0.150px">31.Synth.flac</div>
<svg class="ic" style="left:328px;top:572px" width="22" height="25" viewBox="0 0 22 25"><path d="M3.2 15.3 L19.2 15.3 L21.9 23.2 Q22 24.6 20.6 24.6 L1.4 24.6 Q0 24.6 0.1 23.2 Z" fill="url(#bg)"/>
<path d="M0.4 23.0 L21.6 23.0 L21.9 24.6 L0.1 24.6 Z" fill="#ffb820" opacity="0.8"/>
<ellipse cx="11.2" cy="18.9" rx="7.8" ry="3.4" fill="#cf5a00"/>
<g clip-path="url(#cc)">
<rect x="0" y="0" width="22" height="22" fill="url(#cg)"/>
<rect x="0" y="3.5" width="22" height="4.3" fill="url(#wg)"/>
<rect x="0" y="12.5" width="22" height="5" fill="url(#wg)"/>
</g></svg><div class="fn" style="left:355px;top:578px;letter-spacing:-0.200px">32.Orchestra1.flac</div>
<svg class="ic" style="left:637px;top:572px" width="22" height="25" viewBox="0 0 22 25"><path d="M3.2 15.3 L19.2 15.3 L21.9 23.2 Q22 24.6 20.6 24.6 L1.4 24.6 Q0 24.6 0.1 23.2 Z" fill="url(#bg)"/>
<path d="M0.4 23.0 L21.6 23.0 L21.9 24.6 L0.1 24.6 Z" fill="#ffb820" opacity="0.8"/>
<ellipse cx="11.2" cy="18.9" rx="7.8" ry="3.4" fill="#cf5a00"/>
<g clip-path="url(#cc)">
<rect x="0" y="0" width="22" height="22" fill="url(#cg)"/>
<rect x="0" y="3.5" width="22" height="4.3" fill="url(#wg)"/>
<rect x="0" y="12.5" width="22" height="5" fill="url(#wg)"/>
</g></svg><div class="fn" style="left:664px;top:578px;letter-spacing:-0.080px">33.OrchestraInterlude.flac</div>
<svg class="ic" style="left:19px;top:614px" width="22" height="25" viewBox="0 0 22 25"><path d="M3.2 15.3 L19.2 15.3 L21.9 23.2 Q22 24.6 20.6 24.6 L1.4 24.6 Q0 24.6 0.1 23.2 Z" fill="url(#bg)"/>
<path d="M0.4 23.0 L21.6 23.0 L21.9 24.6 L0.1 24.6 Z" fill="#ffb820" opacity="0.8"/>
<ellipse cx="11.2" cy="18.9" rx="7.8" ry="3.4" fill="#cf5a00"/>
<g clip-path="url(#cc)">
<rect x="0" y="0" width="22" height="22" fill="url(#cg)"/>
<rect x="0" y="3.5" width="22" height="4.3" fill="url(#wg)"/>
<rect x="0" y="12.5" width="22" height="5" fill="url(#wg)"/>
</g></svg><div class="fn" style="left:46px;top:620px;letter-spacing:-0.127px">34.OrchestraClimax.flac</div>
<svg class="ic" style="left:328px;top:614px" width="22" height="25" viewBox="0 0 22 25"><path d="M3.2 15.3 L19.2 15.3 L21.9 23.2 Q22 24.6 20.6 24.6 L1.4 24.6 Q0 24.6 0.1 23.2 Z" fill="url(#bg)"/>
<path d="M0.4 23.0 L21.6 23.0 L21.9 24.6 L0.1 24.6 Z" fill="#ffb820" opacity="0.8"/>
<ellipse cx="11.2" cy="18.9" rx="7.8" ry="3.4" fill="#cf5a00"/>
<g clip-path="url(#cc)">
<rect x="0" y="0" width="22" height="22" fill="url(#cg)"/>
<rect x="0" y="3.5" width="22" height="4.3" fill="url(#wg)"/>
<rect x="0" y="12.5" width="22" height="5" fill="url(#wg)"/>
</g></svg><div class="fn" style="left:355px;top:620px;letter-spacing:-0.278px">35.StringsPizz.flac</div>
<svg class="ic" style="left:637px;top:614px" width="22" height="25" viewBox="0 0 22 25"><path d="M3.2 15.3 L19.2 15.3 L21.9 23.2 Q22 24.6 20.6 24.6 L1.4 24.6 Q0 24.6 0.1 23.2 Z" fill="url(#bg)"/>
<path d="M0.4 23.0 L21.6 23.0 L21.9 24.6 L0.1 24.6 Z" fill="#ffb820" opacity="0.8"/>
<ellipse cx="11.2" cy="18.9" rx="7.8" ry="3.4" fill="#cf5a00"/>
<g clip-path="url(#cc)">
<rect x="0" y="0" width="22" height="22" fill="url(#cg)"/>
<rect x="0" y="3.5" width="22" height="4.3" fill="url(#wg)"/>
<rect x="0" y="12.5" width="22" height="5" fill="url(#wg)"/>
</g></svg><div class="fn" style="left:664px;top:620px">36.StringsMelody.flac</div>
<svg class="ic" style="left:19px;top:656px" width="22" height="25" viewBox="0 0 22 25"><path d="M3.2 15.3 L19.2 15.3 L21.9 23.2 Q22 24.6 20.6 24.6 L1.4 24.6 Q0 24.6 0.1 23.2 Z" fill="url(#bg)"/>
<path d="M0.4 23.0 L21.6 23.0 L21.9 24.6 L0.1 24.6 Z" fill="#ffb820" opacity="0.8"/>
<ellipse cx="11.2" cy="18.9" rx="7.8" ry="3.4" fill="#cf5a00"/>
<g clip-path="url(#cc)">
<rect x="0" y="0" width="22" height="22" fill="url(#cg)"/>
<rect x="0" y="3.5" width="22" height="4.3" fill="url(#wg)"/>
<rect x="0" y="12.5" width="22" height="5" fill="url(#wg)"/>
</g></svg><div class="fn" style="left:46px;top:662px;letter-spacing:-0.107px">37.BariViolin.flac</div>
<svg class="ic" style="left:328px;top:656px" width="22" height="25" viewBox="0 0 22 25"><path d="M3.2 15.3 L19.2 15.3 L21.9 23.2 Q22 24.6 20.6 24.6 L1.4 24.6 Q0 24.6 0.1 23.2 Z" fill="url(#bg)"/>
<path d="M0.4 23.0 L21.6 23.0 L21.9 24.6 L0.1 24.6 Z" fill="#ffb820" opacity="0.8"/>
<ellipse cx="11.2" cy="18.9" rx="7.8" ry="3.4" fill="#cf5a00"/>
<g clip-path="url(#cc)">
<rect x="0" y="0" width="22" height="22" fill="url(#cg)"/>
<rect x="0" y="3.5" width="22" height="4.3" fill="url(#wg)"/>
<rect x="0" y="12.5" width="22" height="5" fill="url(#wg)"/>
</g></svg><div class="fn" style="left:355px;top:662px;letter-spacing:-0.224px">38.StringsEnd.flac</div>
<svg class="ic" style="left:637px;top:656px" width="22" height="25" viewBox="0 0 22 25"><path d="M3.2 15.3 L19.2 15.3 L21.9 23.2 Q22 24.6 20.6 24.6 L1.4 24.6 Q0 24.6 0.1 23.2 Z" fill="url(#bg)"/>
<path d="M0.4 23.0 L21.6 23.0 L21.9 24.6 L0.1 24.6 Z" fill="#ffb820" opacity="0.8"/>
<ellipse cx="11.2" cy="18.9" rx="7.8" ry="3.4" fill="#cf5a00"/>
<g clip-path="url(#cc)">
<rect x="0" y="0" width="22" height="22" fill="url(#cg)"/>
<rect x="0" y="3.5" width="22" height="4.3" fill="url(#wg)"/>
<rect x="0" y="12.5" width="22" height="5" fill="url(#wg)"/>
</g></svg><div class="fn" style="left:664px;top:662px;letter-spacing:-0.155px">39.BrassMelody.flac</div>
<svg class="ic" style="left:19px;top:698px" width="22" height="25" viewBox="0 0 22 25"><path d="M3.2 15.3 L19.2 15.3 L21.9 23.2 Q22 24.6 20.6 24.6 L1.4 24.6 Q0 24.6 0.1 23.2 Z" fill="url(#bg)"/>
<path d="M0.4 23.0 L21.6 23.0 L21.9 24.6 L0.1 24.6 Z" fill="#ffb820" opacity="0.8"/>
<ellipse cx="11.2" cy="18.9" rx="7.8" ry="3.4" fill="#cf5a00"/>
<g clip-path="url(#cc)">
<rect x="0" y="0" width="22" height="22" fill="url(#cg)"/>
<rect x="0" y="3.5" width="22" height="4.3" fill="url(#wg)"/>
<rect x="0" y="12.5" width="22" height="5" fill="url(#wg)"/>
</g></svg><div class="fn" style="left:46px;top:704px;letter-spacing:-0.127px">40.Harp.flac</div>
<svg class="ic" style="left:328px;top:698px" width="22" height="25" viewBox="0 0 22 25"><path d="M3.2 15.3 L19.2 15.3 L21.9 23.2 Q22 24.6 20.6 24.6 L1.4 24.6 Q0 24.6 0.1 23.2 Z" fill="url(#bg)"/>
<path d="M0.4 23.0 L21.6 23.0 L21.9 24.6 L0.1 24.6 Z" fill="#ffb820" opacity="0.8"/>
<ellipse cx="11.2" cy="18.9" rx="7.8" ry="3.4" fill="#cf5a00"/>
<g clip-path="url(#cc)">
<rect x="0" y="0" width="22" height="22" fill="url(#cg)"/>
<rect x="0" y="3.5" width="22" height="4.3" fill="url(#wg)"/>
<rect x="0" y="12.5" width="22" height="5" fill="url(#wg)"/>
</g></svg><div class="fn" style="left:355px;top:704px;letter-spacing:-0.067px">41.MusicBox.flac</div>
<svg class="ic" style="left:637px;top:698px" width="22" height="25" viewBox="0 0 22 25"><path d="M3.2 15.3 L19.2 15.3 L21.9 23.2 Q22 24.6 20.6 24.6 L1.4 24.6 Q0 24.6 0.1 23.2 Z" fill="url(#bg)"/>
<path d="M0.4 23.0 L21.6 23.0 L21.9 24.6 L0.1 24.6 Z" fill="#ffb820" opacity="0.8"/>
<ellipse cx="11.2" cy="18.9" rx="7.8" ry="3.4" fill="#cf5a00"/>
<g clip-path="url(#cc)">
<rect x="0" y="0" width="22" height="22" fill="url(#cg)"/>
<rect x="0" y="3.5" width="22" height="4.3" fill="url(#wg)"/>
<rect x="0" y="12.5" width="22" height="5" fill="url(#wg)"/>
</g></svg><div class="fn" style="left:664px;top:704px;letter-spacing:-0.176px">42.Percussion.flac</div>
<svg class="ic" style="left:19px;top:740px" width="22" height="25" viewBox="0 0 22 25"><path d="M3.2 15.3 L19.2 15.3 L21.9 23.2 Q22 24.6 20.6 24.6 L1.4 24.6 Q0 24.6 0.1 23.2 Z" fill="url(#bg)"/>
<path d="M0.4 23.0 L21.6 23.0 L21.9 24.6 L0.1 24.6 Z" fill="#ffb820" opacity="0.8"/>
<ellipse cx="11.2" cy="18.9" rx="7.8" ry="3.4" fill="#cf5a00"/>
<g clip-path="url(#cc)">
<rect x="0" y="0" width="22" height="22" fill="url(#cg)"/>
<rect x="0" y="3.5" width="22" height="4.3" fill="url(#wg)"/>
<rect x="0" y="12.5" width="22" height="5" fill="url(#wg)"/>
</g></svg><div class="fn" style="left:46px;top:746px;letter-spacing:0.043px">43.Marimba.flac</div>
<svg class="ic" style="left:328px;top:740px" width="22" height="25" viewBox="0 0 22 25"><path d="M3.2 15.3 L19.2 15.3 L21.9 23.2 Q22 24.6 20.6 24.6 L1.4 24.6 Q0 24.6 0.1 23.2 Z" fill="url(#bg)"/>
<path d="M0.4 23.0 L21.6 23.0 L21.9 24.6 L0.1 24.6 Z" fill="#ffb820" opacity="0.8"/>
<ellipse cx="11.2" cy="18.9" rx="7.8" ry="3.4" fill="#cf5a00"/>
<g clip-path="url(#cc)">
<rect x="0" y="0" width="22" height="22" fill="url(#cg)"/>
<rect x="0" y="3.5" width="22" height="4.3" fill="url(#wg)"/>
<rect x="0" y="12.5" width="22" height="5" fill="url(#wg)"/>
</g></svg><div class="fn" style="left:355px;top:746px;letter-spacing:-0.234px">44.Vibes.flac</div>
<svg class="ic" style="left:637px;top:740px" width="22" height="25" viewBox="0 0 22 25"><path d="M3.2 15.3 L19.2 15.3 L21.9 23.2 Q22 24.6 20.6 24.6 L1.4 24.6 Q0 24.6 0.1 23.2 Z" fill="url(#bg)"/>
<path d="M0.4 23.0 L21.6 23.0 L21.9 24.6 L0.1 24.6 Z" fill="#ffb820" opacity="0.8"/>
<ellipse cx="11.2" cy="18.9" rx="7.8" ry="3.4" fill="#cf5a00"/>
<g clip-path="url(#cc)">
<rect x="0" y="0" width="22" height="22" fill="url(#cg)"/>
<rect x="0" y="3.5" width="22" height="4.3" fill="url(#wg)"/>
<rect x="0" y="12.5" width="22" height="5" fill="url(#wg)"/>
</g></svg><div class="fn" style="left:664px;top:746px;letter-spacing:-0.136px">45.MandoSDrumJHarp.flac</div>
<svg class="ic" style="left:19px;top:782px" width="22" height="25" viewBox="0 0 22 25"><path d="M3.2 15.3 L19.2 15.3 L21.9 23.2 Q22 24.6 20.6 24.6 L1.4 24.6 Q0 24.6 0.1 23.2 Z" fill="url(#bg)"/>
<path d="M0.4 23.0 L21.6 23.0 L21.9 24.6 L0.1 24.6 Z" fill="#ffb820" opacity="0.8"/>
<ellipse cx="11.2" cy="18.9" rx="7.8" ry="3.4" fill="#cf5a00"/>
<g clip-path="url(#cc)">
<rect x="0" y="0" width="22" height="22" fill="url(#cg)"/>
<rect x="0" y="3.5" width="22" height="4.3" fill="url(#wg)"/>
<rect x="0" y="12.5" width="22" height="5" fill="url(#wg)"/>
</g></svg><div class="fn" style="left:46px;top:788px;letter-spacing:-0.500px">46.SFX.flac</div>
<svg class="ic" style="left:328px;top:782px" width="22" height="25" viewBox="0 0 22 25"><path d="M3.2 15.3 L19.2 15.3 L21.9 23.2 Q22 24.6 20.6 24.6 L1.4 24.6 Q0 24.6 0.1 23.2 Z" fill="url(#bg)"/>
<path d="M0.4 23.0 L21.6 23.0 L21.9 24.6 L0.1 24.6 Z" fill="#ffb820" opacity="0.8"/>
<ellipse cx="11.2" cy="18.9" rx="7.8" ry="3.4" fill="#cf5a00"/>
<g clip-path="url(#cc)">
<rect x="0" y="0" width="22" height="22" fill="url(#cg)"/>
<rect x="0" y="3.5" width="22" height="4.3" fill="url(#wg)"/>
<rect x="0" y="12.5" width="22" height="5" fill="url(#wg)"/>
</g></svg><div class="fn" style="left:355px;top:788px;letter-spacing:-0.512px">47.CLICK TRACK.flac</div>
<svg class="ic" style="left:638px;top:784px" width="22" height="25" viewBox="0 0 22 25"><path d="M0 0 L14.8 0 L19 4.3 L19 23 L0 23 Z" fill="#f6f6f6"/>
<path d="M14.8 0 L14.8 4.3 L19 4.3 Z" fill="#d0d0d0"/>
<rect x="3.5" y="6.9" width="8.3" height="8.8" fill="#3d454e"/>
<path d="M4.2 8 V14.8 M11.1 8 V14.8" stroke="#9aa" stroke-width="0.6" stroke-dasharray="0.8 1"/>
<rect x="5" y="7.5" width="5.3" height="2.6" fill="#50c8f0"/>
<rect x="5" y="10.1" width="5.3" height="2.3" fill="#d84a6a"/>
<rect x="8.3" y="10.1" width="2" height="2.3" fill="#d08030"/>
<rect x="5" y="12.6" width="5.3" height="2.6" fill="#2a9ef0"/>
<path d="M13.2 6.1 L14.3 6.1 Q14.8 8.2 16.2 9.6 Q17.2 11.5 16.3 14.2 Q16 11.8 14.3 10.6 L14.3 15.5 Q14.1 18.3 11.2 18.2 Q8.4 18 8.9 15.9 Q9.6 13.6 13.2 14 Z" fill="#1e90e8"/></svg><div class="fn" style="left:664px;top:788px;letter-spacing:0.150px">Tempo + Drum MIDI.mid</div>
<!-- status -->
<div id="status"></div>
<div class="t" style="left:13px;top:848px;">48 items</div>
<div class="a" style="left:67px;top:849px;width:1px;height:11px;background:#fff"></div>
<svg class="a" style="left:918px;top:845px" width="42" height="18" viewBox="0 0 42 18">
<rect x="1" y="1" width="16" height="16" rx="2.2" fill="#c6c6c6"/>
<path d="M3.3 4.4 H14.7 M3.3 7.4 H14.7 M3.3 10.4 H14.7 M3.3 13.4 H14.7" stroke="#000" stroke-width="1.1"/>
<rect x="23" y="1" width="16" height="16" rx="2.2" fill="#c6c6c6"/>
<rect x="25.4" y="3.2" width="11.2" height="9.6" rx="1" fill="#fff" stroke="#000" stroke-width="1.1"/>
<path d="M25.2 14.6 H36.8" stroke="#000" stroke-width="1.1"/>
</svg>
</div>
</body></html>
